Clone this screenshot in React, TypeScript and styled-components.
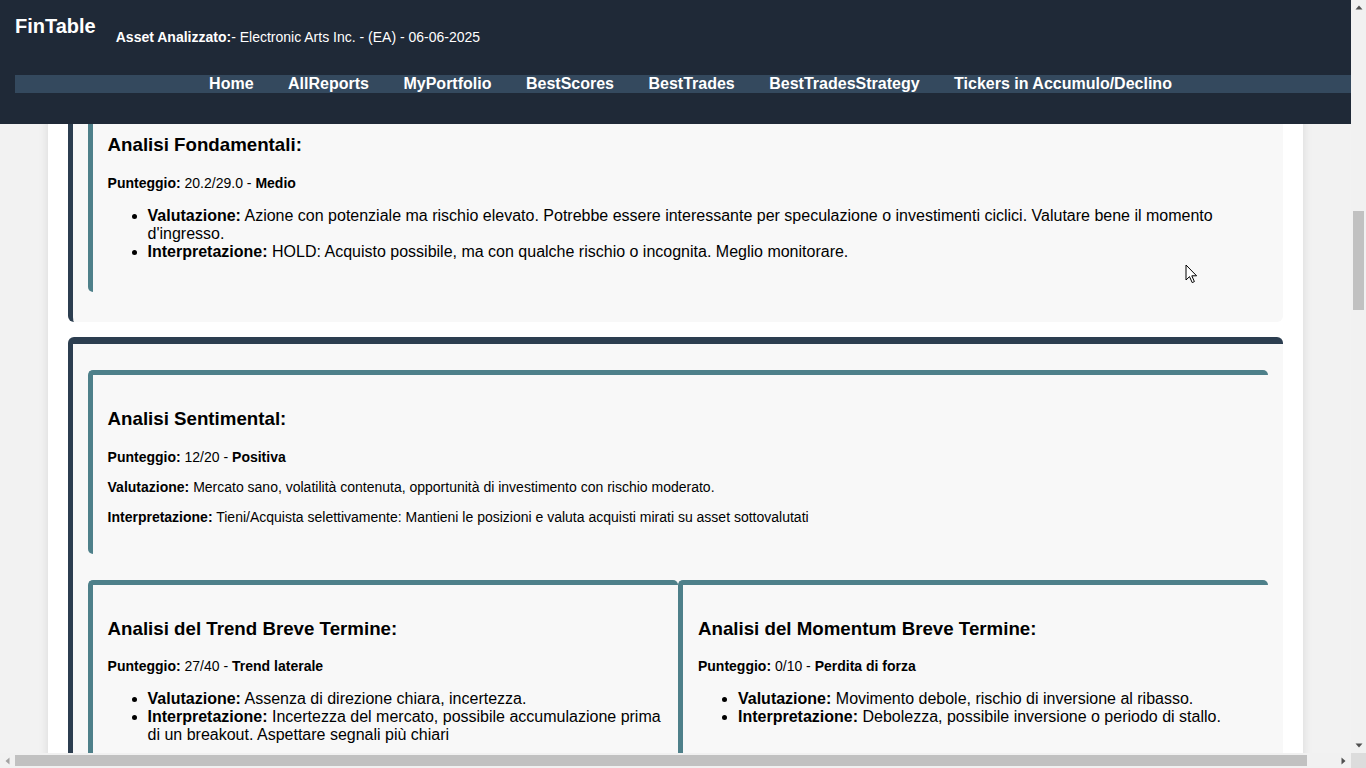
import React, { useLayoutEffect, useRef, useState } from "react";
import styled, { createGlobalStyle } from "styled-components";

const GlobalStyle = createGlobalStyle`
  html, body { margin: 0; padding: 0; overflow: hidden; }
  body {
    background: #f2f2f2;
    font-family: "Liberation Sans", Arial, Helvetica, sans-serif;
    color: #000;
  }
`;

/* ---------- browser frame (viewport + classic scrollbars) ---------- */

const Screen = styled.div`
  width: 100vw;
  height: 100vh;
  display: grid;
  grid-template-columns: minmax(0, 1fr) 15px;
  grid-template-rows: minmax(0, 1fr) 15px;
`;

const Viewport = styled.div`
  overflow: hidden;
  background: #f2f2f2;
  min-width: 0;
  min-height: 0;
`;

const VBar = styled.div`
  display: flex;
  flex-direction: column;
  background: #f1f1f1;
`;

const HBar = styled.div`
  display: flex;
  flex-direction: row;
  background: #f1f1f1;
`;

const Corner = styled.div`
  background: #dcdcdc;
`;

const ArrowBtn = styled.div`
  flex: 0 0 15px;
  width: 15px;
  height: 15px;
  display: flex;
  align-items: center;
  justify-content: center;
`;

const VTrack = styled.div`
  flex: 1;
  display: flex;
  flex-direction: column;
  align-items: center;
`;

const HTrack = styled.div`
  flex: 1;
  display: flex;
  flex-direction: row;
  align-items: center;
`;

const VThumb = styled.div`
  width: 11px;
  background: #c1c1c1;
  flex: none;
`;

const HThumb = styled.div`
  height: 11px;
  background: #c1c1c1;
  flex: none;
`;

/* ---------- page ---------- */

const Header = styled.header`
  position: sticky;
  top: 0;
  width: 100%;
  padding: 15px;
  background: #1f2937;
  color: #fff;
  z-index: 100;
`;

const TopRow = styled.div`
  display: flex;
  align-items: flex-start;
`;

const Logo = styled.h1`
  margin: 0;
  font-size: 20px;
  font-weight: bold;
`;

const AssetInfo = styled.p`
  margin: 14px 0 14px 20px;
  font-size: 14px;
`;

const Nav = styled.nav`
  margin: 16px 0;
  background: #34495e;
  display: flex;
  justify-content: center;
  gap: 34.5px;
`;

const NavLink = styled.a`
  color: #fff;
  font-weight: bold;
  font-size: 16px;
  text-decoration: none;
`;

const Page = styled.main`
  padding: 6px 0 20px;
`;

const Container = styled.div`
  width: 90%;
  margin: 0 auto;
  padding: 20px;
  background: #fff;
  box-shadow: 0 0 10px rgba(0, 0, 0, 0.1);
`;

const Section = styled.section`
  background: #f8f8f8;
  border-top: 7px solid #2c3e50;
  border-left: 5px solid #2c3e50;
  border-radius: 6px;
  padding: 14px 15px 16px;
  margin-bottom: 15px;
  &:last-child {
    margin-bottom: 0;
  }
`;

const Row = styled.div<{ $cols: number }>`
  display: grid;
  grid-template-columns: repeat(${(p) => p.$cols}, minmax(0, 1fr));
`;

const Card = styled.div`
  background: #f8f8f8;
  border-top: 5px solid #4e808a;
  border-left: 5px solid #4e808a;
  border-radius: 5px;
  padding: 15px;
  margin: 12px 0 14px;
`;

const Title = styled.h3`
  font-size: 18.72px;
  margin: 18px 0 18.72px;
`;

const Line = styled.p`
  font-size: 14px;
  margin: 14px 0;
`;

const Points = styled.ul`
  font-size: 16px;
  margin: 16px 0;
  padding-left: 40px;
`;

const Footer = styled.footer`
  padding: 40px 0;
  text-align: center;
  font-size: 14px;
  color: #666;
`;

const Cursor = styled.svg`
  position: fixed;
  left: 1185px;
  top: 264px;
  z-index: 200;
  pointer-events: none;
`;

type Analysis = {
  title: string;
  score: string;
  verdict: string;
  val: string;
  interp: string;
  kind: "list" | "para";
  anchor?: boolean;
};

type SectionData = { rows: Analysis[][] };

const list = (title: string, score: string, verdict: string, val: string, interp: string, anchor = false): Analysis => ({
  title, score, verdict, val, interp, kind: "list", anchor,
});
const para = (title: string, score: string, verdict: string, val: string, interp: string): Analysis => ({
  title, score, verdict, val, interp, kind: "para",
});

const sections: SectionData[] = [
  {
    rows: [
      [para("Analisi Complessiva:", "68.5/100", "Buono", "Titolo solido con fondamentali stabili e sentiment moderatamente positivo.", "Mantenere la posizione e valutare incrementi su eventuali ritracciamenti.")],
      [
        list("Analisi del Trend Lungo Termine:", "32/40", "Trend rialzista", "Struttura di prezzo positiva.", "Tendenza favorevole, adatta all'accumulo."),
        list("Analisi del Momentum Lungo Termine:", "6/10", "Momentum stabile", "Forza del movimento costante.", "Nessun segnale di esaurimento evidente."),
      ],
    ],
  },
  {
    rows: [
      [para("Analisi Tecnica:", "14/20", "Neutrale", "Prezzo in prossimità delle medie mobili principali, volatilità nella norma.", "Attendere conferme prima di aprire nuove posizioni.")],
      [
        list("Analisi del Trend Medio Termine:", "24/40", "Trend laterale", "Fase di consolidamento in corso.", "Mercato in equilibrio, attendere una rottura."),
        list("Analisi del Momentum Medio Termine:", "4/10", "Momentum debole", "Spinta direzionale ridotta.", "Possibile fase di stallo nel breve periodo."),
      ],
    ],
  },
  {
    rows: [
      [para("Analisi dei Volumi:", "11/20", "Nella media", "Volumi in linea con la media degli ultimi tre mesi, senza anomalie.", "Nessun segnale di distribuzione o accumulazione significativa.")],
      [
        list("Analisi della Volatilità:", "7/10", "Contenuta", "Oscillazioni di prezzo moderate.", "Rischio gestibile per posizioni medie."),
        list("Analisi del Rischio:", "6/10", "Moderato", "Drawdown recenti limitati.", "Profilo di rischio adeguato."),
      ],
    ],
  },
  {
    rows: [
      [
        list(
          "Analisi Fondamentali:",
          "20.2/29.0",
          "Medio",
          "Azione con potenziale ma rischio elevato. Potrebbe essere interessante per speculazione o investimenti ciclici. Valutare bene il momento d'ingresso.",
          "HOLD: Acquisto possibile, ma con qualche rischio o incognita. Meglio monitorare.",
          true
        ),
      ],
    ],
  },
  {
    rows: [
      [para("Analisi Sentimental:", "12/20", "Positiva", "Mercato sano, volatilità contenuta, opportunità di investimento con rischio moderato.", "Tieni/Acquista selettivamente: Mantieni le posizioni e valuta acquisti mirati su asset sottovalutati")],
      [
        list("Analisi del Trend Breve Termine:", "27/40", "Trend laterale", "Assenza di direzione chiara, incertezza.", "Incertezza del mercato, possibile accumulazione prima di un breakout. Aspettare segnali più chiari"),
        list("Analisi del Momentum Breve Termine:", "0/10", "Perdita di forza", "Movimento debole, rischio di inversione al ribasso.", "Debolezza, possibile inversione o periodo di stallo."),
      ],
    ],
  },
  {
    rows: [
      [para("Analisi delle Medie Mobili:", "13/20", "Positiva", "Prezzo sopra la media a 200 giorni, media a 50 giorni in leggera crescita.", "Struttura costruttiva, mantenere le posizioni in essere.")],
      [
        list("Analisi RSI:", "5/10", "Neutrale", "Indicatore in zona centrale.", "Nessun eccesso di acquisto o vendita."),
        list("Analisi MACD:", "4/10", "Debole", "Linea sotto il segnale.", "Momentum in rallentamento."),
      ],
    ],
  },
  {
    rows: [
      [para("Analisi Supporti e Resistenze:", "12/20", "Neutrale", "Prezzo compreso tra supporto e resistenza principali.", "Operare sui livelli chiave con stop ben definiti.")],
      [
        list("Analisi Bande di Bollinger:", "6/10", "Stabile", "Prezzo vicino alla banda centrale.", "Bassa probabilità di movimenti estremi."),
        list("Analisi Stocastico:", "5/10", "Neutrale", "Oscillatore in zona intermedia.", "Attendere un incrocio significativo."),
      ],
    ],
  },
  {
    rows: [
      [para("Analisi Settoriale:", "14/20", "Positiva", "Settore in crescita con domanda stabile e buone prospettive.", "Contesto favorevole per il titolo nel medio periodo.")],
      [
        list("Analisi Forza Relativa:", "6/10", "Buona", "Performance superiore al mercato.", "Titolo preferibile rispetto ai concorrenti."),
        list("Analisi Confronto Indici:", "5/10", "In linea", "Andamento simile all'indice.", "Nessun vantaggio relativo evidente."),
      ],
    ],
  },
  {
    rows: [
      [para("Analisi degli Utili:", "15/20", "Buona", "Utili in crescita costante negli ultimi trimestri.", "Fondamentali solidi a supporto della valutazione.")],
      [
        list("Analisi dei Ricavi:", "7/10", "In crescita", "Ricavi in aumento anno su anno.", "Domanda stabile per i prodotti."),
        list("Analisi dei Margini:", "6/10", "Stabili", "Marginalità in linea con il settore.", "Efficienza operativa adeguata."),
      ],
    ],
  },
  {
    rows: [
      [para("Analisi del Debito:", "16/20", "Solida", "Indebitamento contenuto e ampia liquidità disponibile.", "Bilancio sano, basso rischio finanziario.")],
      [
        list("Analisi della Liquidità:", "8/10", "Elevata", "Cassa abbondante.", "Ampia flessibilità finanziaria."),
        list("Analisi dei Flussi di Cassa:", "7/10", "Positivi", "Free cash flow in crescita.", "Capacità di autofinanziamento."),
      ],
    ],
  },
  {
    rows: [
      [para("Analisi delle Stime:", "12/20", "Neutrali", "Consenso degli analisti stabile, target price poco sopra i prezzi attuali.", "Nessuna revisione significativa attesa a breve.")],
      [
        list("Analisi dei Dividendi:", "4/10", "Contenuti", "Rendimento basso ma stabile.", "Titolo orientato alla crescita."),
        list("Analisi Valutazione Relativa:", "5/10", "In linea", "Multipli vicini alla media del settore.", "Prezzo coerente con i fondamentali."),
      ],
    ],
  },
  {
    rows: [[para("Conclusioni:", "64.0/100", "Medio", "Titolo con buone basi ma momentum di breve periodo debole.", "Monitorare e valutare ingressi graduali.")]],
  },
];

const navItems = ["Home", "AllReports", "MyPortfolio", "BestScores", "BestTrades", "BestTradesStrategy", "Tickers in Accumulo/Declino"];

function AnalysisCard({ a, anchorRef }: { a: Analysis; anchorRef: React.RefObject<HTMLHeadingElement | null> }) {
  return (
    <Card>
      <Title ref={a.anchor ? anchorRef : undefined}>{a.title}</Title>
      <Line>
        <b>Punteggio:</b> {a.score} - <b>{a.verdict}</b>
      </Line>
      {a.kind === "list" ? (
        <Points>
          <li>
            <b>Valutazione:</b> {a.val}
          </li>
          <li>
            <b>Interpretazione:</b> {a.interp}
          </li>
        </Points>
      ) : (
        <>
          <Line>
            <b>Valutazione:</b> {a.val}
          </Line>
          <Line>
            <b>Interpretazione:</b> {a.interp}
          </Line>
        </>
      )}
    </Card>
  );
}

const Tri = ({ dir, color }: { dir: "up" | "down" | "left" | "right"; color: string }) => {
  const pts = {
    up: "0.5,4.5 4,0.5 7.5,4.5",
    down: "0.5,0.5 7.5,0.5 4,4.5",
    left: "4.5,0.5 4.5,7.5 0.5,4",
    right: "0.5,0.5 0.5,7.5 4.5,4",
  }[dir];
  const vertical = dir === "up" || dir === "down";
  return (
    <svg width={vertical ? 8 : 5} height={vertical ? 5 : 8} viewBox={vertical ? "0 0 8 5" : "0 0 5 8"}>
      <polygon points={pts} fill={color} />
    </svg>
  );
};

type Thumbs = { vTop: number; vSize: number; hLeft: number; hSize: number };

export default function App() {
  const anchorRef = useRef<HTMLHeadingElement | null>(null);
  const viewRef = useRef<HTMLDivElement | null>(null);
  const [thumbs, setThumbs] = useState<Thumbs>({ vTop: 0, vSize: 100, hLeft: 0, hSize: 1290 });

  useLayoutEffect(() => {
    const view = viewRef.current;
    const el = anchorRef.current;
    if (!view || !el) return;
    const offset = el.getBoundingClientRect().top - view.getBoundingClientRect().top + view.scrollTop;
    view.scrollTop = offset - 134;
    const vTrack = view.clientHeight - 30;
    const hTrack = view.clientWidth - 30;
    const vSize = Math.max(17, Math.round((vTrack * view.clientHeight) / view.scrollHeight));
    const hSize = Math.max(17, Math.round((hTrack * view.clientWidth) / view.scrollWidth));
    const vMax = view.scrollHeight - view.clientHeight;
    const vTop = vMax > 0 ? Math.round((view.scrollTop / vMax) * (vTrack - vSize)) : 0;
    setThumbs({ vTop, vSize, hLeft: 0, hSize });
  }, []);

  return (
    <>
      <GlobalStyle />
      <Screen>
        <Viewport ref={viewRef}>
          <Header>
            <TopRow>
              <Logo>FinTable</Logo>
              <AssetInfo>
                <b>Asset Analizzato:</b>- Electronic Arts Inc. - (EA) - 06-06-2025
              </AssetInfo>
            </TopRow>
            <Nav>
              {navItems.map((n) => (
                <NavLink key={n} href="#">
                  {n}
                </NavLink>
              ))}
            </Nav>
          </Header>
          <Page>
            <Container>
              {sections.map((s, i) => (
                <Section key={i}>
                  {s.rows.map((r, j) => (
                    <Row key={j} $cols={r.length}>
                      {r.map((a) => (
                        <AnalysisCard key={a.title} a={a} anchorRef={anchorRef} />
                      ))}
                    </Row>
                  ))}
                </Section>
              ))}
            </Container>
            <Footer>© 2025 FinTable - Tutti i diritti riservati</Footer>
          </Page>
        </Viewport>
        <VBar>
          <ArrowBtn>
            <Tri dir="up" color="#505050" />
          </ArrowBtn>
          <VTrack>
            <VThumb style={{ marginTop: thumbs.vTop, height: thumbs.vSize }} />
          </VTrack>
          <ArrowBtn>
            <Tri dir="down" color="#505050" />
          </ArrowBtn>
        </VBar>
        <HBar>
          <ArrowBtn>
            <Tri dir="left" color="#a3a3a3" />
          </ArrowBtn>
          <HTrack>
            <HThumb style={{ marginLeft: thumbs.hLeft, width: thumbs.hSize }} />
          </HTrack>
          <ArrowBtn>
            <Tri dir="right" color="#505050" />
          </ArrowBtn>
        </HBar>
        <Corner />
      </Screen>
      <Cursor width="13" height="20" viewBox="0 0 13 20">
        <path d="M1 1 L1 16 L4.5 12.6 L7.2 18.6 L9.4 17.6 L6.8 11.8 L11.6 11.8 Z" fill="#fff" stroke="#000" strokeWidth="1" strokeLinejoin="round" />
      </Cursor>
    </>
  );
}
